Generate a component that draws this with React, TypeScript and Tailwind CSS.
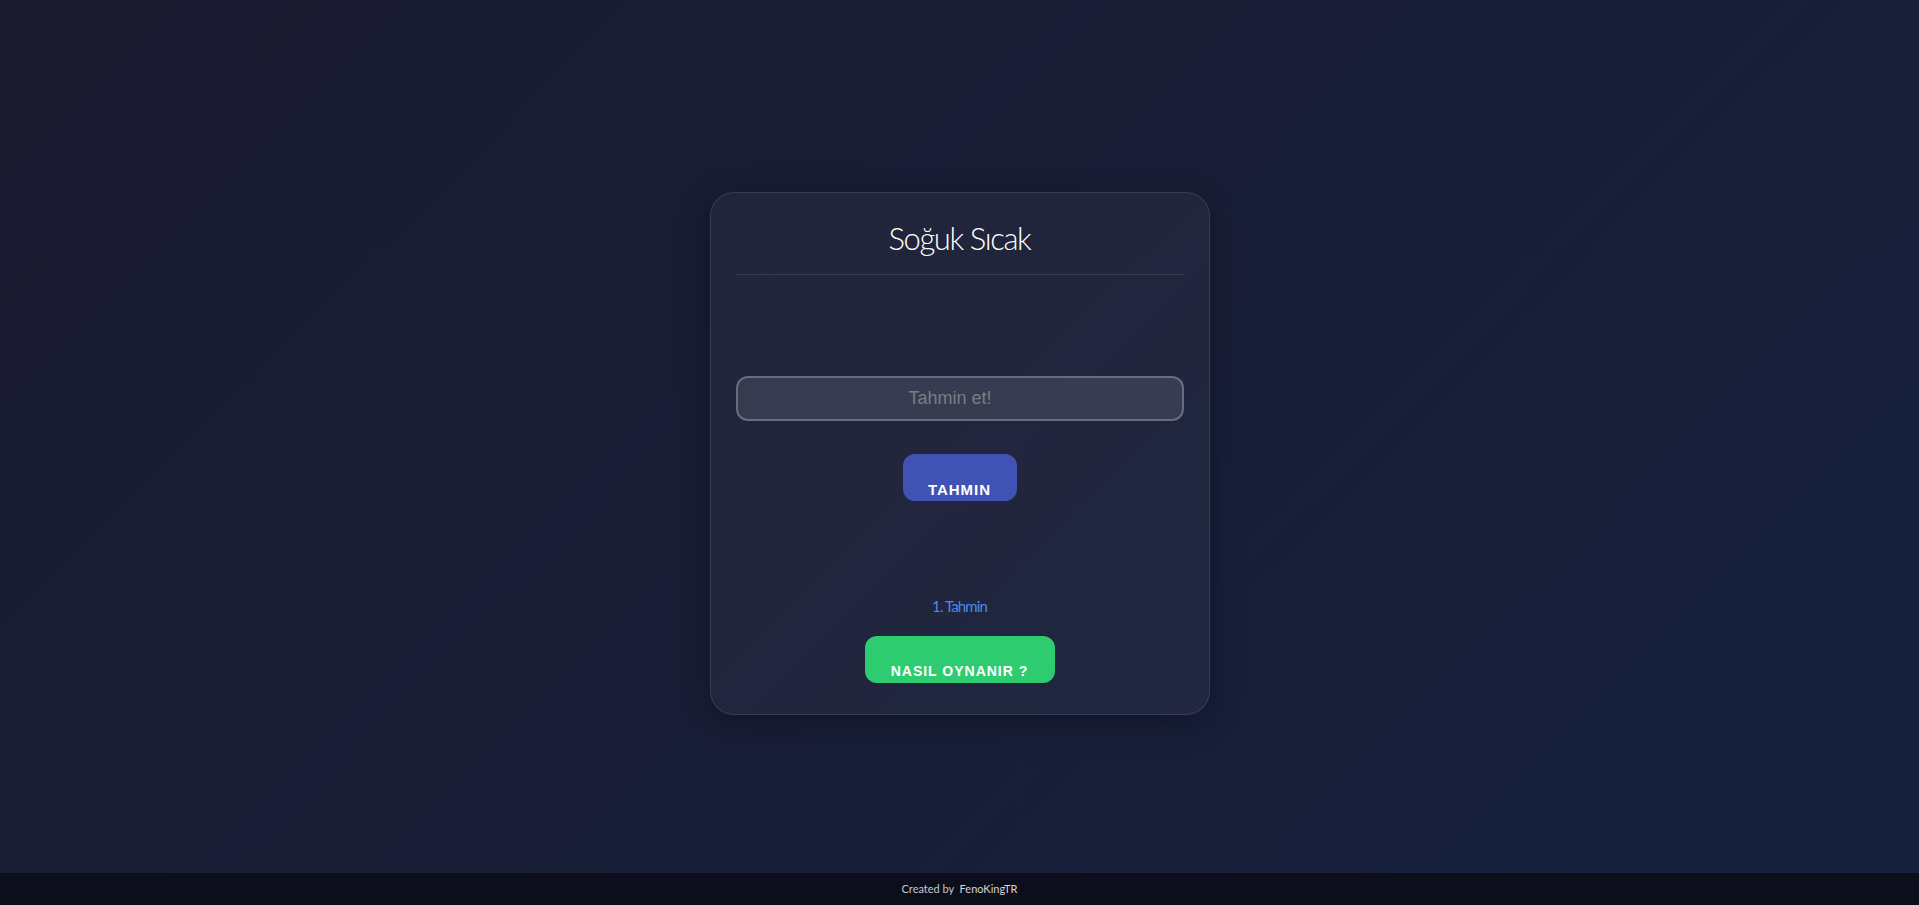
import { useState } from 'react'

// Single-card guessing game screen with a thin credit bar pinned to the bottom.
export default function App() {
  const [guess, setGuess] = useState('')

  return (
    <div className="min-h-screen bg-[linear-gradient(135deg,#1a1a2e_0%,#16213e_100%)] font-['Lato','Open_Sans',sans-serif]">
      <div className="flex min-h-screen items-center justify-center pt-[2px]">
        <div className="w-[500px] rounded-[24px] border border-white/10 bg-white/[0.04] px-[25px] pt-[26px] pb-[31px] text-center shadow-[0_8px_32px_rgba(0,0,0,0.3)]">
          <h1 className="border-b border-white/10 pb-[17px] text-[31px] leading-[38px] font-light tracking-[-1.4px] text-white">
            Soğuk Sıcak
          </h1>

          <div className="h-[101px]" />

          <input
            value={guess}
            onChange={(e) => setGuess(e.target.value)}
            placeholder="Tahmin et!"
            className="h-[45px] w-full rounded-[12px] border-2 border-white/25 bg-white/10 pr-[19px] text-center font-['Liberation_Sans',Arial,sans-serif] text-[18px] text-white outline-none placeholder:text-[#7b7c86]"
          />

          <div className="mt-[33px] flex justify-center">
            <button className="flex h-[47px] w-[114px] items-end justify-center rounded-[12px] bg-[#4152b5] pb-[4px] font-['Liberation_Sans',Arial,sans-serif] text-[15px] leading-none font-bold tracking-[1px] text-white">
              TAHMIN
            </button>
          </div>

          <p className="mt-[95px] text-[15px] leading-[21px] tracking-[-0.9px] text-[#4a8ae6]">1. Tahmin</p>

          <div className="mt-[19px] flex justify-center">
            <button className="flex h-[47px] w-[190px] items-end justify-center rounded-[12px] bg-[#2ecc71] pb-[5px] font-['Liberation_Sans',Arial,sans-serif] text-[14px] leading-none font-bold tracking-[1px] text-white">
              NASIL OYNANIR ?
            </button>
          </div>
        </div>
      </div>

      <footer className="fixed inset-x-0 bottom-0 flex h-[32px] items-center justify-center bg-[#0c0f1b] text-[11px] text-[#c4c6cc]">
        Created by&nbsp;&nbsp;<span className="text-[#d4d6dc]">FenoKingTR</span>
      </footer>
    </div>
  )
}
